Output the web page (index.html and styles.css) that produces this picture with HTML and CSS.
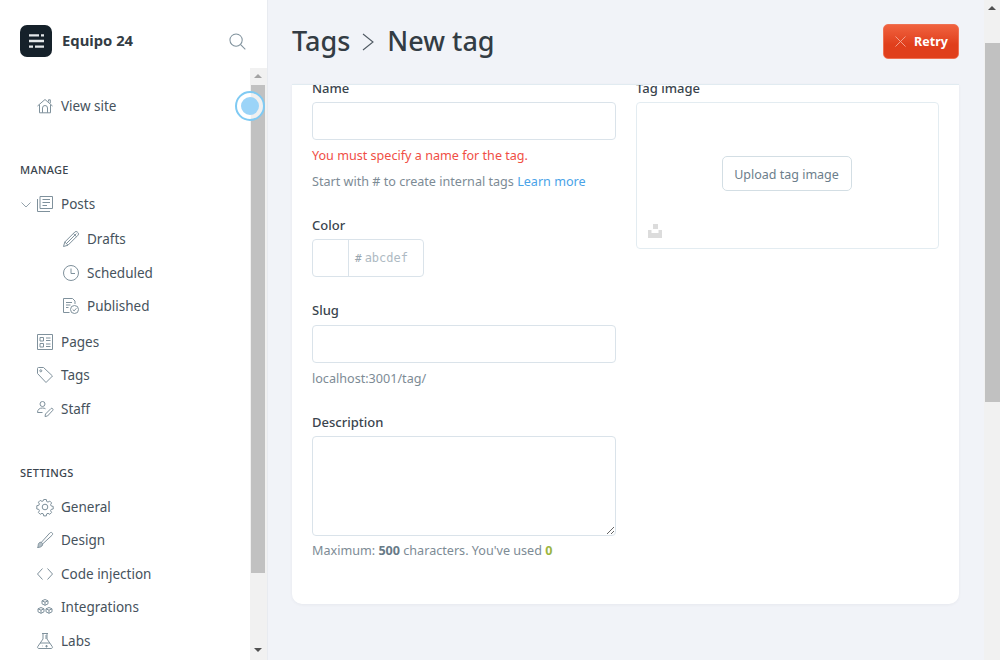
FILE: index.html
```html
<!DOCTYPE html>
<html>
  <head>
    <title>Tags - New tag</title>
    <link rel="stylesheet" href="styles.css">
  </head>
  <body>
    <aside class="sidebar">
      <div class="brand">
        <div class="logo">
          <svg viewBox="0 0 32 32" width="32" height="32"><path d="M9 9.200h10v2.400H9zM21 9.200h3v2.400h-3zM9 14.800h15v2.400H9zM9 20.400h4v2.400H9zM15 20.400h9v2.400h-9z" fill="#e4e8ea"/></svg>
        </div>
        <span class="brand-name">Equipo 24</span>
        <svg class="search" viewBox="0 0 18 18" width="17" height="17"><circle cx="7.500" cy="7.500" r="6.500"/><path d="M12.300 12.300l5 5"/></svg>
      </div>
      <div class="side-body">
        <nav class="nav">
          <a class="item view-site">
            <svg class="icon" viewBox="0 0 16 16"><path d="M.5 8L8 1.500 15.500 8M2.500 6.800v8h11v-8M5.500 14.800V10a2.500 2.500 0 0 1 5 0v4.800M11.500 3.500V1.800h1.800v3.400"/></svg>
            View site
          </a>
          <h4 class="nav-title manage">MANAGE</h4>
          <a class="item">
            <svg class="caret" viewBox="0 0 10 6"><path d="M.5.500L5 5 9.500.5"/></svg>
            <svg class="icon" viewBox="0 0 16 16"><path d="M3 .5h12.500v12H3zM.5 3v12.500H13M5.500 3.500h7.500M5.500 6.500h7.500M5.500 9.500h4.500"/></svg>
            Posts
          </a>
          <div class="sub">
            <a class="item">
              <svg class="icon" viewBox="0 0 16 16"><path d="M.5 15.500l1.300-4.500L11.800 1a1.800 1.800 0 0 1 2.500 0l.7.700a1.800 1.800 0 0 1 0 2.500L5 14.200zM1.800 11L5 14.200M3.400 12.600l10-10M10.300 2.500l3.200 3.200"/></svg>
              Drafts
            </a>
            <a class="item">
              <svg class="icon" viewBox="0 0 16 16"><circle cx="8" cy="8" r="7.500"/><path d="M8 3.500V8.500h4"/></svg>
              Scheduled
            </a>
            <a class="item">
              <svg class="icon" viewBox="0 0 16 16"><path d="M6.500 14.500H.5V.5h9l2.500 2.500v3M3 4.500h6M3 7h4.500M3 9.500h2.500"/><circle cx="11.500" cy="11.500" r="4"/><path d="M9.700 11.500l1.400 1.400 2.300-2.600"/></svg>
              Published
            </a>
          </div>
          <a class="item">
            <svg class="icon" viewBox="0 0 16 16"><path d="M.5.500h15v15H.5zM3 3.500h3.500V7H3zM3 9.500h3.500V13H3zM9 4h4.500M9 6.500h4.500M9 10h4.500M9 12.500h4.500"/></svg>
            Pages
          </a>
          <a class="item">
            <svg class="icon" viewBox="0 0 16 16"><path d="M.5 1.500a1 1 0 0 1 1-1h5l9 8.500-6.500 6.500L.5 6.500z"/><circle cx="3.800" cy="3.800" r="1"/></svg>
            Tags
          </a>
          <a class="item">
            <svg class="icon" viewBox="0 0 16 16"><circle cx="5.500" cy="3" r="2.500"/><path d="M.5 11.500c0-3 2-4.500 5-4.500 1.200 0 2.200.3 3 .8M.5 11.500h5M8 15.500l.5-2.500 5.500-5.500a1.300 1.300 0 0 1 1.800 1.800L10.500 15z"/></svg>
            Staff
          </a>
          <h4 class="nav-title settings">SETTINGS</h4>
          <a class="item">
            <svg class="icon" viewBox="0 0 16 16"><circle cx="8" cy="8" r="2.800"/><path d="M6.700.5h2.600l.4 2 1.300.6 1.800-1 1.800 1.800-1 1.800.6 1.300 2 .4v2.600l-2 .4-.6 1.300 1 1.800-1.800 1.800-1.800-1-1.300.6-.4 2H6.700l-.4-2-1.300-.6-1.800 1-1.800-1.800 1-1.800-.6-1.300-2-.4V6.700l2-.4.6-1.300-1-1.800L3.200 1.400l1.800 1 1.300-.6z"/></svg>
            General
          </a>
          <a class="item">
            <svg class="icon" viewBox="0 0 16 16"><path d="M.5 15.500c.6-.8.600-1.500.8-3 .2-1.500 1.500-2.500 2.800-2.200 1.200.3 1.800 1.500 1.400 2.700-.5 1.500-2.500 2.500-5 2.500z" fill="#b5c0c7"/><path d="M4.500 10.200L12.800 1c.8-.8 2-.7 2.500 0 .5.700.4 1.500-.2 2.200L6 11.600"/></svg>
            Design
          </a>
          <a class="item">
            <svg class="icon" viewBox="0 0 16 16"><path d="M5.500 2.500L.5 8l5 5.500M10.500 2.500l5 5.500-5 5.500"/></svg>
            Code injection
          </a>
          <a class="item">
            <svg class="icon" viewBox="0 0 16 16"><path d="M8 .5l3 1.300v3L8 6.300 5 4.800v-3zM4 8.500l3 1.300v3l-3 1.500-3-1.500v-3zM12 8.500l3 1.300v3l-3 1.500-3-1.500v-3zM5 1.800l3 1.400 3-1.400M8 3.200v3.100M1 9.800l3 1.400 3-1.400M4 11.200v3.100M9 9.800l3 1.400 3-1.400M12 11.200v3.100"/></svg>
            Integrations
          </a>
          <a class="item">
            <svg class="icon" viewBox="0 0 16 16"><path d="M5 .5h6M6 .5v5.500L.8 13.500c-.6 1 0 2 1 2h12.400c1 0 1.600-1 1-2L10 6V.5M3 10h10M8 3h2M8 5h2M9.500 12v2.500M8.300 13.200h2.500M5 13h.5"/></svg>
            Labs
          </a>
        </nav>
        <div class="bar side-bar">
          <span class="arrow up"></span>
          <div class="thumb"></div>
          <span class="arrow down"></span>
        </div>
      </div>
      <div class="pulse"><div class="pulse-core"></div></div>
    </aside>

    <main class="main">
      <header class="head">
        <h2 class="crumbs">
          <span>Tags</span>
          <svg class="crumb-sep" viewBox="0 0 12 18" width="12" height="18"><path d="M1 1l10 8-10 8"/></svg>
          <span>New tag</span>
        </h2>
        <button class="retry">
          <svg viewBox="0 0 12 12" width="11" height="11"><path d="M.5.500l11 11M11.500.5l-11 11"/></svg>
          Retry
        </button>
      </header>

      <section class="card">
        <div class="col">
          <label class="label first">Name</label>
          <input class="input" type="text">
          <p class="note error">You must specify a name for the tag.</p>
          <p class="note hint">Start with # to create internal tags <a class="link">Learn more</a></p>

          <label class="label color-label">Color</label>
          <div class="color">
            <div class="swatch"></div>
            <div class="hex"><span class="hash">#</span>abcdef</div>
          </div>

          <label class="label slug-label">Slug</label>
          <input class="input" type="text">
          <p class="note slug-url">localhost:3001/tag/</p>

          <label class="label desc-label">Description</label>
          <textarea class="input area"></textarea>
          <p class="note count">Maximum: <b>500</b> characters. You've used <b class="used">0</b></p>
        </div>
        <div class="col">
          <label class="label first">Tag image</label>
          <div class="upload">
            <button class="upload-btn">Upload tag image</button>
            <svg class="placeholder" viewBox="0 0 14 14" width="14" height="14"><path d="M5 0h5v5H5zM0 6h3.500v3h7V6H14v8H0z"/></svg>
          </div>
        </div>
      </section>
    </main>

    <div class="bar page-bar">
      <span class="arrow up"></span>
      <div class="thumb"></div>
    </div>
  </body>
</html>
```

FILE: styles.css
```css
* {
  box-sizing: border-box;
}
body {
  margin: 0;
  height: 660px;
  overflow: hidden;
  display: flex;
  background: #f1f3f8;
  color: #394047;
  font-family: "Noto Sans", sans-serif;
  font-size: 13px;
}

/* sidebar */
.sidebar {
  position: relative;
  width: 268px;
  flex: none;
  background: #fff;
  border-right: 1px solid #e8ebf0;
  display: flex;
  flex-direction: column;
  height: 660px;
}
.brand {
  height: 68px;
  flex: none;
  display: flex;
  align-items: center;
  padding: 14px 21px 0 20px;
}
.logo {
  width: 32px;
  height: 32px;
  border-radius: 7px;
  background: #15212a;
}
.brand-name {
  margin: -2px 0 0 10px;
  font-size: 14.800px;
  font-weight: 700;
  color: #333c44;
  flex: 1;
}
.search {
  fill: none;
  stroke: #7f919c;
  stroke-width: 1.100;
}
.side-body {
  flex: 1;
  display: flex;
  min-height: 0;
}
.nav {
  flex: 1;
  padding: 21px 0 0 20px;
  overflow: hidden;
}
.item {
  height: 33.600px;
  display: flex;
  align-items: center;
  padding-left: 17px;
  font-size: 13.500px;
  color: #46525c;
  position: relative;
}
.icon {
  width: 16px;
  height: 16px;
  margin-right: 8px;
  flex: none;
  fill: none;
  stroke: #7f919c;
  stroke-width: 1;
  overflow: visible;
}
.caret {
  position: absolute;
  left: 1px;
  top: 14px;
  width: 10px;
  height: 6px;
  fill: none;
  stroke: #95a3ac;
  stroke-width: 1;
}
.sub {
  padding: 1px 0 2px 26px;
}
.nav-title {
  margin: 0;
  font-size: 11px;
  font-weight: 500;
  letter-spacing: .3px;
  line-height: 16px;
  color: #3a444d;
}
.manage {
  margin: 39px 0 10px;
}
.settings {
  margin: 39px 0 9px;
}
.pulse {
  position: absolute;
  left: 235px;
  top: 91px;
  width: 30px;
  height: 30px;
  border-radius: 50%;
  border: 2px solid #7fcaf3;
  background: rgba(255, 255, 255, .75);
  display: flex;
  align-items: center;
  justify-content: center;
}
.pulse-core {
  width: 18px;
  height: 18px;
  border-radius: 50%;
  background: #9bd4f8;
}

/* scrollbars */
.bar {
  width: 16px;
  flex: none;
  background: #f1f1f1;
  display: flex;
  flex-direction: column;
  align-items: center;
}
.side-bar {
  width: 17px;
  padding-right: 1px;
}
.thumb {
  background: #c1c1c1;
  width: 14px;
}
.arrow {
  width: 0;
  height: 0;
  flex: none;
  border-left: 4px solid transparent;
  border-right: 4px solid transparent;
}
.up {
  border-bottom: 4px solid #a3a3a3;
  margin: 6px 0 7px;
}
.down {
  border-top: 4px solid #505050;
  margin: 75px 0 4px;
}
.side-bar .thumb {
  height: 488px;
}
.page-bar .up {
  border-bottom-color: #505050;
  margin: 6px 0 33px;
}
.page-bar .thumb {
  height: 359px;
  width: 15px;
}

/* main */
.main {
  flex: 1;
  min-width: 0;
  padding: 0 25px 0 24px;
}
.head {
  height: 84px;
  display: flex;
  align-items: flex-start;
  justify-content: space-between;
}
.crumbs {
  margin: 20px 0 0;
  font-size: 27px;
  line-height: 42px;
  font-weight: 500;
  color: #333c44;
  display: flex;
  align-items: center;
}
.crumb-sep {
  margin: 2px 13px 0 12px;
  fill: none;
  stroke: #4f5962;
  stroke-width: 1.100;
}
.retry {
  margin-top: 24px;
  width: 76px;
  height: 35px;
  border: 1px solid #ef7052;
  border-radius: 5px;
  background: linear-gradient(#f0623f, #e03f1c 60%);
  color: #fff;
  font-family: inherit;
  font-size: 12.500px;
  font-weight: 700;
  display: flex;
  align-items: center;
  justify-content: center;
  gap: 8px;
  padding: 0 0 0 1px;
}
.retry svg {
  fill: none;
  stroke: #f4a795;
  stroke-width: 1;
}
.card {
  height: 520px;
  background: #fff;
  border-top: 1px solid #e1ebf1;
  border-radius: 0 0 10px 10px;
  box-shadow: 0 1px 3px rgba(60, 70, 90, .06);
  overflow: hidden;
  padding: 0 20px;
  display: grid;
  grid-template-columns: 304px 303px;
  gap: 20px;
}
.label {
  display: block;
  font-size: 13px;
  font-weight: 500;
  line-height: 18px;
  color: #3a444d;
}
.first {
  margin: -6px 0 5px;
}
.input {
  display: block;
  width: 304px;
  height: 38px;
  border: 1px solid #dae3ea;
  border-radius: 4px;
  background: #fff;
  outline: none;
}
.area {
  height: 100px;
  font-family: inherit;
}
.note {
  margin: 0;
  font-size: 12.600px;
  line-height: 18px;
  color: #7d8b95;
}
.error {
  margin-top: 7px;
  color: #f04e45;
}
.hint {
  margin-top: 8px;
}
.link {
  color: #4aa3e8;
}
.color-label {
  margin: 25px 0 5px;
}
.color {
  width: 112px;
  height: 38px;
  border: 1px solid #dae3ea;
  border-radius: 4px;
  display: flex;
}
.swatch {
  width: 36px;
  border-right: 1px solid #dae3ea;
}
.hex {
  padding-left: 6px;
  font-family: "DejaVu Sans Mono", monospace;
  font-size: 12px;
  line-height: 36px;
  color: #aebac3;
}
.hash {
  margin-right: 3px;
  font-size: 11px;
  color: #98a5ae;
}
.slug-label {
  margin: 24px 0 6px;
}
.slug-url {
  margin-top: 7px;
}
.desc-label {
  margin: 25px 0 5px;
}
.count {
  margin-top: 6px;
}
.count b {
  color: #677a87;
}
.count .used {
  color: #9bb53f;
}
.upload {
  position: relative;
  height: 147px;
  border: 1px solid #e3ecf1;
  border-radius: 4px;
  display: flex;
  align-items: center;
  justify-content: center;
}
.upload-btn {
  width: 130px;
  height: 35px;
  margin: -5px 2px 0 0;
  padding: 2px 0 0;
  border: 1px solid #d3dee4;
  border-radius: 5px;
  background: #fff;
  font-family: inherit;
  font-size: 12.500px;
  color: #6c7e8b;
}
.placeholder {
  position: absolute;
  left: 11px;
  bottom: 10px;
  fill: #dcdcdc;
}
```
